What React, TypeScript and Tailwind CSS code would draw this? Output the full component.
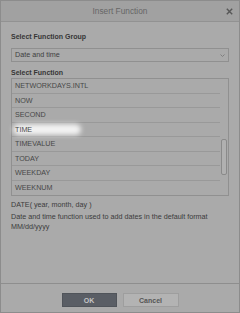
import * as React from 'react';

const functions = [
  'NETWORKDAYS.INTL',
  'NOW',
  'SECOND',
  'TIME',
  'TIMEVALUE',
  'TODAY',
  'WEEKDAY',
  'WEEKNUM',
];

function CloseIcon() {
  return (
    <svg width="7" height="7" viewBox="0 0 7 7" className="block">
      <path d="M0.8 0.8 L6.2 6.2 M6.2 0.8 L0.8 6.2" stroke="#575757" strokeWidth="1.4" fill="none" />
    </svg>
  );
}

function Chevron() {
  return (
    <svg width="5" height="3" viewBox="0 0 5 3" className="block">
      <path d="M0.5 0.5 L2.5 2.5 L4.5 0.5" stroke="#7a7a7a" strokeWidth="0.9" fill="none" />
    </svg>
  );
}

export default function App() {
  const selected = 'TIME';

  return (
    <div className="flex h-[313px] w-[240px] flex-col border border-[#8c8c8c] bg-[#aaaaaa] font-['Liberation_Sans',Arial,sans-serif]">
      <div className="relative flex h-[21px] shrink-0 items-center justify-center border-b border-[#929292] bg-[#a1a1a1]">
        <span className="text-[8.3px] leading-none text-[#666666]">Insert Function</span>
        <button className="absolute right-[6px] top-[7px]">
          <CloseIcon />
        </button>
      </div>

      <div className="flex flex-1 flex-col px-[10px]">
        <div className="mt-[10px] text-[7px] font-bold leading-[9px] text-[#363636]">
          Select Function Group
        </div>
        <div className="mt-[7px] flex h-[14px] items-center justify-between border border-[#909090] pl-[3px] pr-[3px]">
          <span className="text-[7.2px] leading-none text-[#404040]">Date and time</span>
          <Chevron />
        </div>

        <div className="mt-[6px] text-[7px] font-bold leading-[9px] text-[#363636]">
          Select Function
        </div>
        <div className="mt-[1px] flex h-[118px] border border-[#909090]">
          <div className="flex flex-1 flex-col">
            {functions.map((name, i) => (
              <div
                key={name}
                className={
                  i < functions.length - 1
                    ? 'relative flex h-[14.6px] items-center border-b border-[#999999] pl-[3px]'
                    : 'relative flex h-[14.6px] items-center pl-[3px]'
                }
              >
                {name === selected ? (
                  <span className="absolute left-[1px] top-[1px] bottom-[1px] w-[68px] rounded-[6px] bg-white/85 blur-[2.5px]" />
                ) : null}
                <span className="relative text-[7.2px] leading-none text-[#474747]">{name}</span>
              </div>
            ))}
          </div>
          <div className="w-[8px] pt-[60px]">
            <div className="ml-[1px] h-[36px] w-[6px] rounded-[2px] border border-[#8a8a8a] bg-[#b0b0b0]" />
          </div>
        </div>

        <div className="mt-[4px] text-[7.2px] leading-[9px] text-[#3b3b3b]">DATE( year, month, day )</div>
        <div className="mt-[3px] text-[7.2px] leading-[10px] text-[#3b3b3b]">
          Date and time function used to add dates in the default format MM/dd/yyyy
        </div>
      </div>

      <div className="flex h-[29px] shrink-0 justify-center gap-[6px] border-t border-[#8e8e8e] pt-[9px]">
        <button className="h-[14px] w-[55px] border border-[#50545a] bg-[#5a5e65] text-[7px] font-bold leading-none text-[#c6c6c6]">
          OK
        </button>
        <button className="h-[14px] w-[56px] border border-[#9e9e9e] bg-[#b3b3b3] text-[7px] font-bold leading-none text-[#555555]">
          Cancel
        </button>
      </div>
    </div>
  );
}
